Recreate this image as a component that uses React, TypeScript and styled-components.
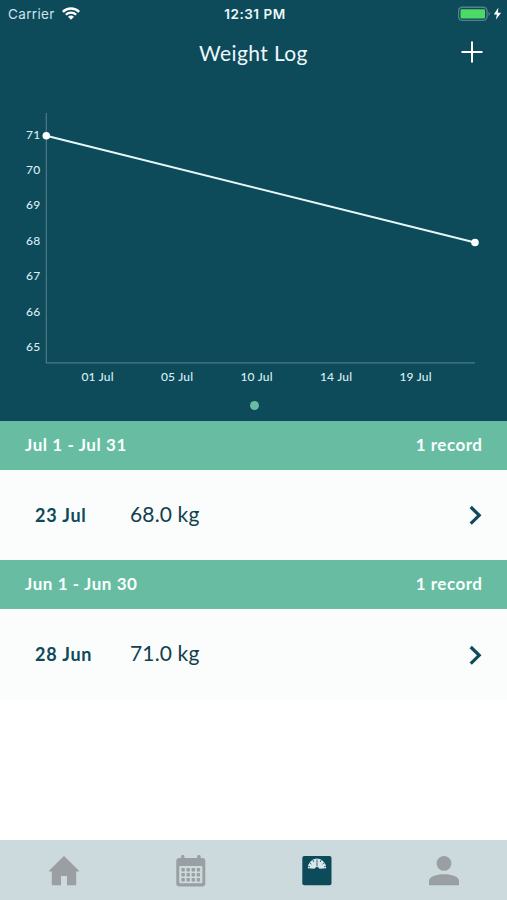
import React from "react";
import styled, { createGlobalStyle } from "styled-components";

const navy = "#0d4a5a";
const green = "#67bca2";

const GlobalStyle = createGlobalStyle`
  * { box-sizing: border-box; }
  body { margin: 0; background: #fff; }
`;

const Screen = styled.div`
  display: flex;
  flex-direction: column;
  width: 507px;
  height: 900px;
  overflow: hidden;
  background: #fff;
  font-family: Lato, "Open Sans", sans-serif;
`;

const Hero = styled.header`
  display: flex;
  flex-direction: column;
  height: 421px;
  background: ${navy};
  color: #eef9fc;
`;

const StatusBar = styled.div`
  display: grid;
  grid-template-columns: 1fr auto 1fr;
  align-items: center;
  height: 27px;
  padding: 0 5px 0 8px;
  font-family: Inter, Roboto, sans-serif;
  font-size: 13.5px;
`;

const Carrier = styled.div`
  display: flex;
  align-items: center;
  gap: 7px;
  color: #cfe3e9;
  letter-spacing: 0.35px;
`;

const Clock = styled.div`
  font-weight: 600;
  font-size: 13.5px;
  letter-spacing: 0.55px;
`;

const Power = styled.div`
  display: flex;
  align-items: center;
  justify-content: flex-end;
`;

const NavBar = styled.div`
  display: grid;
  grid-template-columns: 1fr auto 1fr;
  align-items: center;
  height: 50px;
  padding: 0 24px 0 24px;
`;

const Title = styled.h1`
  grid-column: 2;
  margin: 0;
  padding-top: 1px;
  font-size: 21px;
  font-weight: 400;
  line-height: 26px;
  letter-spacing: 0.4px;
`;

const AddButton = styled.button`
  justify-self: end;
  display: flex;
  padding: 0;
  border: 0;
  background: none;
`;

const Chart = styled.svg`
  display: block;
  width: 507px;
  height: 313px;
`;

const AxisLabel = styled.text`
  fill: #d9edf3;
  font-size: 12px;
  font-weight: 500;
  letter-spacing: 0.2px;
`;

const Pager = styled.div`
  display: flex;
  justify-content: center;
  padding: 11px 0 0 1px;
`;

const PageDot = styled.span`
  width: 9px;
  height: 9px;
  border-radius: 50%;
  background: ${green};
`;

const Log = styled.main`
  flex: 1;
`;

const MonthHeader = styled.div`
  display: flex;
  align-items: center;
  justify-content: space-between;
  height: 49px;
  padding: 0 25px 2px;
  background: ${green};
  color: #fafffd;
  font-size: 17px;
  font-weight: 700;
`;

const Tracked = styled.span<{ $track: number }>`
  letter-spacing: ${(p) => p.$track}px;
  margin-right: ${(p) => -p.$track}px;
`;

const Entry = styled.div`
  display: grid;
  grid-template-columns: 95px 1fr auto;
  align-items: center;
  height: 90.4px;
  padding: 0 25px 0 35px;
  background: #fafdfc;
  color: ${navy};
`;

const EntryDate = styled.span`
  padding-bottom: 1px;
  font-size: 18px;
  font-weight: 700;
  letter-spacing: 0.8px;
`;

const Weight = styled.span`
  padding-bottom: 4px;
  color: #123f4d;
  font-size: 21px;
  letter-spacing: 0.15px;
`;

const TabBar = styled.nav`
  display: grid;
  grid-template-columns: repeat(4, 1fr);
  height: 60px;
  background: #cddadd;
`;

const Tab = styled.button<{ $active?: boolean }>`
  display: flex;
  align-items: center;
  justify-content: center;
  padding: 1px 0 0 1px;
  border: 0;
  background: none;
  color: ${(p) => (p.$active ? navy : "#999fa2")};
`;

const WifiIcon = () => (
  <svg width="18" height="13" viewBox="0 0 18 13" fill="#fff">
    <path d="M0 3.9A12.7 12.7 0 0 1 18 3.9L16.3 5.7A10.3 10.3 0 0 0 1.7 5.7Z" />
    <path d="M3 6.9A8.5 8.5 0 0 1 15 6.9L13.3 8.6A6.1 6.1 0 0 0 4.7 8.6Z" />
    <path d="M6 9.8A4.2 4.2 0 0 1 12 9.8L9 12.8Z" />
  </svg>
);

const BatteryIcon = () => (
  <svg width="44" height="16" viewBox="0 0 44 16">
    <rect x=".5" y="1.2" width="28.5" height="13.2" rx="3.8" fill="none" stroke="#56818c" strokeWidth="1.4" />
    <rect x="2.5" y="3.2" width="24.5" height="9.2" rx="1.2" fill="#4cd964" />
    <path d="M30.5 5.4Q32 6.3 32 7.8T30.5 10.2Z" fill="#56818c" />
    <path d="M40.4 1.6L35.8 8.4H38.9L37.8 13.8L43.1 6.7H39.8Z" fill="#fff" />
  </svg>
);

const PlusIcon = () => (
  <svg width="22" height="22" viewBox="0 0 22 22" stroke="#fff" strokeWidth="2">
    <path d="M11 .5V21.5M.5 11H21.5" />
  </svg>
);

const ChevronIcon = () => (
  <svg width="13" height="20" viewBox="0 0 13 20" fill="none" stroke={navy} strokeWidth="3.2">
    <path d="M1.7 2L10.2 10.3L1.7 18.6" />
  </svg>
);

const HomeIcon = () => (
  <svg width="30" height="30" viewBox="0 0 30 30" fill="currentColor">
    <path d="M15 0L30 14.7V15.5H27.2V29.2H18V20H12V29.2H2.8V15.5H0V14.7Z" />
  </svg>
);

const CalendarIcon = () => (
  <svg width="30" height="32" viewBox="0 0 30 32">
    <g fill="currentColor">
      <rect x=".3" y="3" width="29" height="28.5" rx="3" />
      <rect x="5" y="0" width="3.4" height="6" rx="1.4" />
      <rect x="21.2" y="0" width="3.4" height="6" rx="1.4" />
    </g>
    <rect x="3.2" y="11" width="23.2" height="17.3" rx="1" fill="#cddadd" />
    <g fill="currentColor">
      {[13, 18, 23].map((y) =>
        [5.4, 10.5, 15.6, 20.7].map((x) => (
          <rect key={`${x}-${y}`} x={x} y={y} width="3.4" height="3.4" rx=".7" />
        ))
      )}
    </g>
  </svg>
);

const ScaleIcon = () => (
  <svg width="30" height="30" viewBox="0 0 30 30">
    <rect x=".3" y="0" width="29.2" height="29.2" rx="2" fill="currentColor" />
    <path d="M5.8 12.2A9.1 9.5 0 0 1 24.2 12.2L17.5 12.8A2.7 2.7 0 0 0 12.5 12.8Z" fill="#d8e8ec" />
    <path
      d="M15 3.4V10.5M11 4L11.8 6M19 4L18.2 6M7.9 6.8L9.5 8.2M22.1 6.8L20.5 8.2M6.4 10.4L8 10.8M23.6 10.4L22 10.8"
      stroke={navy}
      strokeWidth=".8"
    />
  </svg>
);

const ProfileIcon = () => (
  <svg width="30" height="30" viewBox="0 0 30 30" fill="currentColor">
    <circle cx="15" cy="7.4" r="7.4" />
    <path d="M0 29.2V24.7C0 20.7 7.5 18.3 15 18.3S30 20.7 30 24.7V29.2Z" />
  </svg>
);

const weights = [71, 70, 69, 68, 67, 66, 65];
const dates = ["01 Jul", "05 Jul", "10 Jul", "14 Jul", "19 Jul"];
const months = [
  { range: "Jul 1 - Jul 31", date: "23 Jul", weight: "68.0 kg" },
  { range: "Jun 1 - Jun 30", date: "28 Jun", weight: "71.0 kg" },
];

export default function App() {
  return (
    <Screen>
      <GlobalStyle />
      <Hero>
        <StatusBar>
          <Carrier>
            Carrier <WifiIcon />
          </Carrier>
          <Clock>12:31 PM</Clock>
          <Power>
            <BatteryIcon />
          </Power>
        </StatusBar>
        <NavBar>
          <Title>Weight Log</Title>
          <AddButton aria-label="Add weight">
            <PlusIcon />
          </AddButton>
        </NavBar>
        <Chart viewBox="0 77 507 313">
          <path d="M46.3 113V362.8H475" fill="none" stroke="#4c7a86" strokeWidth="1.2" />
          {weights.map((w, i) => (
            <AxisLabel key={w} x="40.3" y={138.5 + i * 35.45} textAnchor="end">
              {w}
            </AxisLabel>
          ))}
          {dates.map((d, i) => (
            <AxisLabel key={d} x={97.6 + i * 79.5} y="380.5" textAnchor="middle">
              {d}
            </AxisLabel>
          ))}
          <path d="M46.3 135.8L475 242.5" stroke="#e6f7fb" strokeWidth="2" />
          <circle cx="46.3" cy="135.8" r="3.8" fill="#fff" />
          <circle cx="475" cy="242.5" r="3.8" fill="#fff" />
        </Chart>
        <Pager>
          <PageDot />
        </Pager>
      </Hero>
      <Log>
        {months.map((m) => (
          <section key={m.range}>
            <MonthHeader>
              <Tracked $track={0.58}>{m.range}</Tracked>
              <Tracked $track={0.5}>1 record</Tracked>
            </MonthHeader>
            <Entry>
              <EntryDate>{m.date}</EntryDate>
              <Weight>{m.weight}</Weight>
              <ChevronIcon />
            </Entry>
          </section>
        ))}
      </Log>
      <TabBar>
        <Tab aria-label="Home"><HomeIcon /></Tab>
        <Tab aria-label="Calendar"><CalendarIcon /></Tab>
        <Tab aria-label="Weight" $active><ScaleIcon /></Tab>
        <Tab aria-label="Profile"><ProfileIcon /></Tab>
      </TabBar>
    </Screen>
  );
}
